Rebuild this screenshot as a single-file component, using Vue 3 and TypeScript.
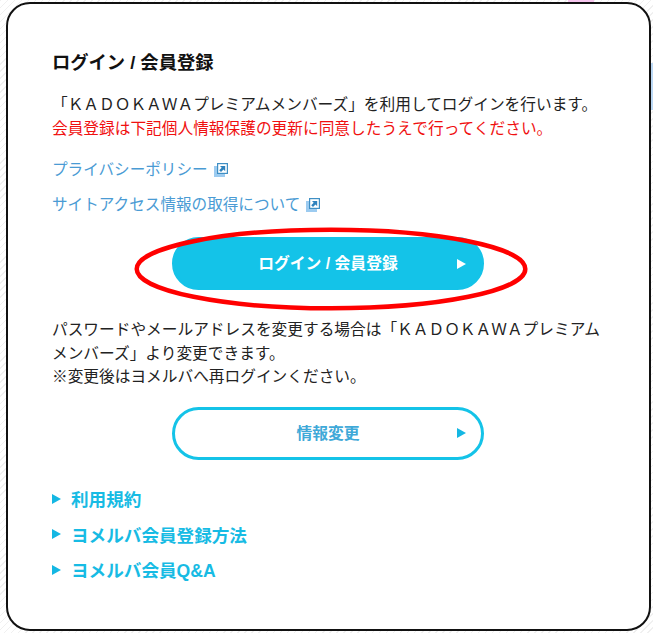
<script setup lang="ts">
const links: string[] = ['プライバシーポリシー', 'サイトアクセス情報の取得について']
const items: string[] = ['利用規約', 'ヨメルバ会員登録方法', 'ヨメルバ会員Q&A']
</script>

<template>
  <div class="page">
    <main class="card">
      <h2 class="title">ログイン / 会員登録</h2>
      <p class="lead">「ＫＡＤＯＫＡＷＡプレミアムメンバーズ」を利用してログインを行います。</p>
      <p class="lead red">会員登録は下記個人情報保護の更新に同意したうえで行ってください。</p>
      <ul class="links">
        <li v-for="l in links" :key="l">
          <a class="link">{{ l }}
            <svg class="ext" viewBox="0 0 14 14" width="14" height="14">
              <rect x="0" y="3" width="11" height="11" fill="#9ccbf0" />
              <rect x="3" y="0" width="11" height="11" fill="#fff" />
              <rect x="3.6" y="0.6" width="9.8" height="9.8" fill="none" stroke="#3f8fc4" stroke-width="1.2" />
              <path d="M6 3h5.2v5.2L9.500 6.500 7 9 5.200 7.200 7.700 4.700z" fill="#2f82bd" />
            </svg>
          </a>
        </li>
      </ul>
      <div class="btn-wrap first">
        <button class="btn solid">
          <span>ログイン / 会員登録</span>
          <i class="tri white"></i>
        </button>
        <svg class="ring" viewBox="0 0 396 90" width="396" height="90">
          <ellipse cx="198" cy="45" rx="194.300" ry="39.300" fill="none" stroke="#f00" stroke-width="4.500" />
        </svg>
      </div>
      <p class="body">パスワードやメールアドレスを変更する場合は「ＫＡＤＯＫＡＷＡプレミアムメンバーズ」より変更できます。<br />※変更後はヨメルバへ再ログインください。</p>
      <div class="btn-wrap second">
        <button class="btn outline">
          <span>情報変更</span>
          <i class="tri"></i>
        </button>
      </div>
      <ul class="items">
        <li v-for="i in items" :key="i"><i class="tri"></i><span>{{ i }}</span></li>
      </ul>
    </main>
  </div>
</template>

<style>
html, body { margin: 0; background: #fff; }
</style>

<style scoped>
.page {
  width: 658px;
  height: 633px;
  box-sizing: border-box;
  padding: 2px 7px 2px 6px;
  font-family: "Liberation Sans", "Noto Sans CJK JP", sans-serif;
  background:
    linear-gradient(#f6c6ee, #f6c6ee) 568px 0 / 26px 2px no-repeat,
    linear-gradient(#bcd9f5, #bcd9f5) 651px 63px / 2px 47px no-repeat,
    linear-gradient(#fff, #fff) 653px 0 / 5px 633px no-repeat,
    repeating-linear-gradient(135deg, #f0f0f0 0 1px, #fff 1px 5px);
}
.card {
  height: 100%;
  box-sizing: border-box;
  border: 2px solid #111;
  border-radius: 24px;
  padding: 47px 45px 0 44px;
  background: #fff;
}
.title {
  margin: 0 0 18px;
  font-size: 18.3px;
  line-height: 24px;
  font-weight: 700;
  color: #111;
}
.lead {
  margin: 0;
  font-size: 15.7px;
  line-height: 23.5px;
  color: #222;
  white-space: nowrap;
}
.red { color: #f01010; }
.links {
  list-style: none;
  margin: 18px 0 0;
  padding: 0;
  display: flex;
  flex-direction: column;
  gap: 11px;
}
.links li { line-height: 24px; height: 24px; }
.link {
  display: inline-flex;
  align-items: center;
  gap: 6px;
  font-size: 15.6px;
  color: #4a9bd4;
}
.ext { flex: none; }
.btn-wrap {
  position: relative;
  display: flex;
  justify-content: center;
}
.first { margin-top: 20px; }
.second { margin-top: 18px; }
.btn {
  position: relative;
  width: 312px;
  height: 53px;
  box-sizing: border-box;
  border-radius: 27px;
  border: 3px solid #14c3e8;
  font: 700 15.8px "Liberation Sans", "Noto Sans CJK JP", sans-serif;
  display: flex;
  align-items: center;
  justify-content: center;
  padding: 0 0 2px;
}
.solid { background: #14c3e8; color: #fff; }
.outline { background: #fff; color: #3fa9d8; }
.btn .tri { position: absolute; right: 15px; top: 50%; margin-top: -5px; }
.tri {
  display: block;
  flex: none;
  width: 0;
  height: 0;
  border-left: 9px solid #14b7e3;
  border-top: 5px solid transparent;
  border-bottom: 5px solid transparent;
}
.tri.white { border-left-color: #fff; }
.ring {
  position: absolute;
  left: 80.500px;
  top: -13.500px;
  pointer-events: none;
}
.body {
  margin: 28px 0 0;
  font-size: 15.7px;
  line-height: 23.5px;
  color: #222;
}
.items {
  list-style: none;
  margin: 27px 0 0;
  padding: 0;
  display: flex;
  flex-direction: column;
  gap: 11.500px;
}
.items li {
  display: flex;
  align-items: center;
  gap: 10px;
  height: 24px;
  font-size: 17.6px;
  font-weight: 700;
  color: #17bbe4;
}
</style>
